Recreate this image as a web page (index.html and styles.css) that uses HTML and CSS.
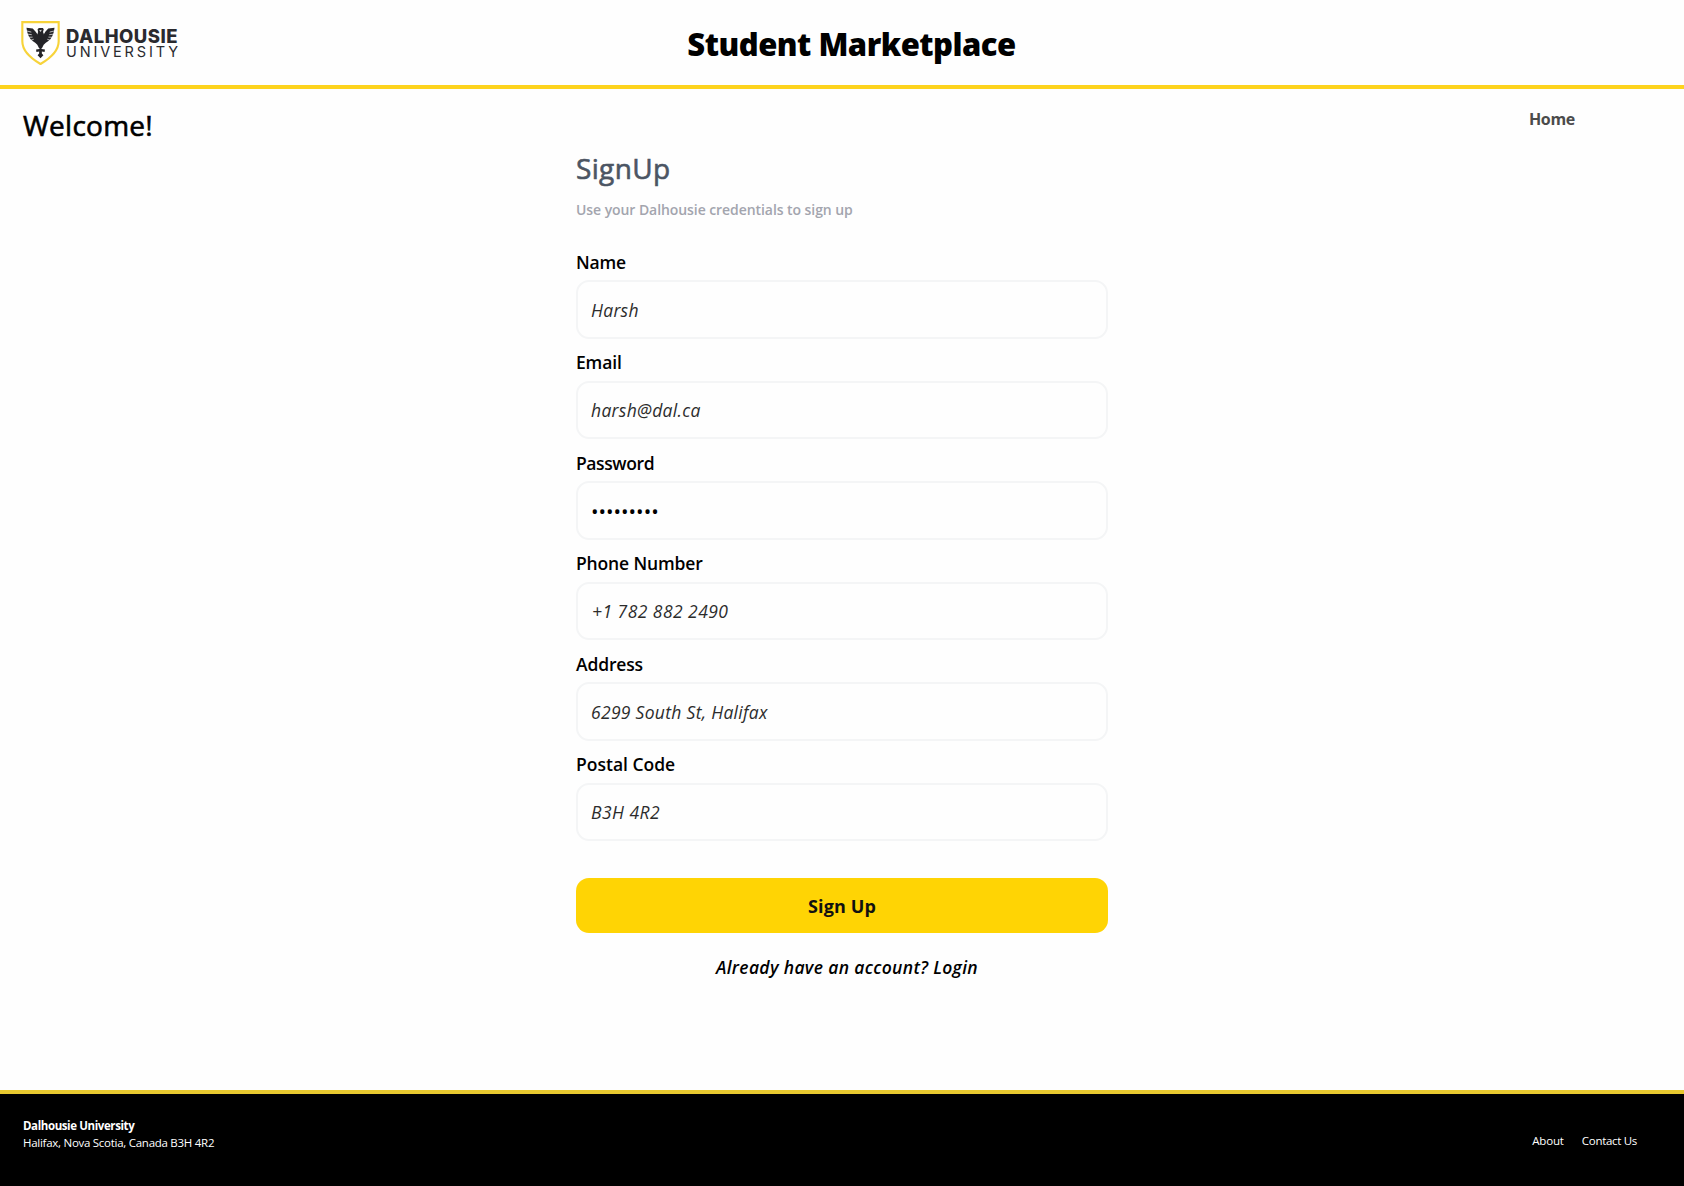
FILE: index.html
```html
<!DOCTYPE html>
<html lang="en">
<head>
<meta charset="utf-8">
<title>Student Marketplace</title>
<link rel="stylesheet" href="styles.css">
</head>
<body>
<header class="header">
  <a class="brand">
    <svg class="crest" viewBox="0 0 40 45.5" width="39" height="44">
      <path d="M1.2 1.2H38.8V21C38.8 31.5 29.5 39 20 44.5C10.500 39 1.200 31.500 1.200 21Z" fill="#fff" stroke="#f7d33a" stroke-width="2.2"/>
      <g fill="#242428">
        <path d="M5.500 7L12 7.800L15 11L17 14V8.600L18.300 7.200H22.500L23.300 8.600V14L25 11L28 7.800L34.500 7L34 10L33.300 13L32 16L30.200 18.800L27.800 21L25.500 22.500L23.300 24.500L21.600 28H18.400L16.700 24.500L14.500 22.500L12.200 21L9.800 18.800L8 16L6.700 13L6 10Z"/>
        <path d="M18.900 26H21.100V29L24.600 29.500L24.200 32L21.400 31.500V33.500L23 35.500L20 38.500L17 35.500L18.600 33.500V31.500L15.800 32L15.400 29.500L18.900 29Z"/>
      </g>
      <path d="M5.500 10.200L10.500 11.500M6 13.500L11 14.200M7.500 16.800L11.800 16.700M9.800 20L13 18.900M34.500 10.200L29.500 11.500M34 13.500L29 14.200M32.500 16.800L28.200 16.700M30.200 20L27 18.900" stroke="#fff" stroke-width=".7"/>
      <path d="M15.700 7.500L17.300 10.500V13L15.600 10.500ZM24.500 7.500L22.800 10.500V13L24.700 10.500Z" fill="#fff"/>
      <path d="M18.500 9.500L21.300 9L20.300 11.400Z" fill="#ccc"/>
    </svg>
    <span class="wordmark">
      <span class="wordmark-top">DALHOUSIE</span>
      <span class="wordmark-bottom">UNIVERSITY</span>
    </span>
  </a>
  <h1 class="title">Student Marketplace</h1>
</header>
<div class="topbar">
  <h2 class="welcome">Welcome!</h2>
  <a class="home">Home</a>
</div>
<main class="main">
  <form class="form">
    <h2 class="form-title">SignUp</h2>
    <p class="hint">Use your Dalhousie credentials to sign up</p>
    <label class="field"><span class="label">Name</span><input class="input" type="text" value="Harsh"></label>
    <label class="field"><span class="label">Email</span><input class="input" type="text" value="harsh@dal.ca"></label>
    <label class="field"><span class="label l-password">Password</span><input class="input i-password" type="text" value="•••••••••"></label>
    <label class="field"><span class="label">Phone Number</span><input class="input i-phone" type="text" value="+1 782 882 2490"></label>
    <label class="field"><span class="label">Address</span><input class="input" type="text" value="6299 South St, Halifax"></label>
    <label class="field"><span class="label l-postal">Postal Code</span><input class="input i-postal" type="text" value="B3H 4R2"></label>
    <button class="submit" type="button">Sign Up</button>
    <p class="login">Already have an account? Login</p>
  </form>
</main>
<footer class="footer">
  <div class="address">
    <strong class="org">Dalhousie University</strong>
    <span class="place">Halifax, Nova Scotia, Canada B3H 4R2</span>
  </div>
  <nav class="links"><a class="about">About</a><a class="contact">Contact Us</a></nav>
</footer>
</body>
</html>
```
FILE: styles.css
```css
* { box-sizing: border-box; }
body {
  margin: 0;
  height: 1186px;
  display: flex;
  flex-direction: column;
  background: #fefefe;
  color: #000;
  font-family: "Open Sans", "Noto Sans", sans-serif;
  overflow: hidden;
}
h1, h2, p { margin: 0; }
.header {
  height: 89px;
  display: grid;
  grid-template-columns: 1fr auto 1fr;
  align-items: center;
  padding: 0 21px;
  border-bottom: 4px solid #fdd31d;
}
.brand { display: flex; align-items: center; gap: 6px; }
.crest { display: block; }
.wordmark { display: flex; flex-direction: column; padding-top: 1px; color: #2a2a2e; white-space: nowrap; }
.wordmark-top { font: 800 18.5px/16px Inter, sans-serif; letter-spacing: 0.5px; }
.wordmark-bottom { font: 400 14.5px/15px Inter, sans-serif; letter-spacing: 2.85px; }
.title { font-size: 31px; line-height: 40px; font-weight: 800; letter-spacing: -0.5px; padding: 2px 0 0 19px; white-space: nowrap; }
.topbar { height: 60.4px; display: flex; justify-content: space-between; padding: 16px 109px 0 23px; }
.welcome { font-size: 28px; line-height: 40px; font-weight: 400; letter-spacing: 0.25px; -webkit-text-stroke: 0.6px currentColor; }
.home { font-size: 16px; line-height: 28px; font-weight: 700; letter-spacing: -0.3px; color: #4b4b4b; }
.main { flex: 1; display: flex; justify-content: center; }
.form { width: 532px; display: flex; flex-direction: column; }
.form-title { font-size: 28px; line-height: 38px; font-weight: 400; letter-spacing: 0.35px; color: #4b5563; -webkit-text-stroke: 0.6px currentColor; }
.hint { font-size: 14px; line-height: 20px; margin: 13px 0 29.5px; font-weight: 600; letter-spacing: -0.07px; color: #a3a5ae; }
.field { display: flex; flex-direction: column; height: 100.5px; }
.label { font-size: 17.5px; line-height: 24px; height: 30.3px; font-weight: 600; letter-spacing: -0.15px; }
.l-password { letter-spacing: -0.4px; }
.l-postal { letter-spacing: 0; }
.label, .hint, .form-title, .login { white-space: nowrap; }
.input {
  height: 58.5px;
  padding: 1px 13px 0;
  border: 2px solid #f4f5f6;
  border-radius: 13px;
  background: #fefefe;
  color: #2c2c2c;
  font: italic 400 17.5px "Open Sans", "Noto Sans", sans-serif;
  letter-spacing: 0.3px;
  outline: none;
}
.i-password { font-style: normal; font-size: 20px; letter-spacing: 0; color: #000; padding: 2px 13px 0; }
.i-phone { letter-spacing: 0.45px; padding-left: 14px; }
.i-postal { letter-spacing: 0.45px; }
.submit {
  height: 55px;
  margin-top: 25px;
  padding: 2px 0 0;
  border: 0;
  border-radius: 13px;
  background: #ffd404;
  color: #111;
  font: 700 18px "Open Sans", "Noto Sans", sans-serif;
  letter-spacing: 0.1px;
}
.login { margin: 21px 0 0 10px; text-align: center; font-size: 17.5px; line-height: 26px; font-style: italic; font-weight: 600; letter-spacing: 0.33px; }
.footer {
  height: 96px;
  display: flex;
  justify-content: space-between;
  border-top: 4px solid #e8c92f;
  background: #000;
  color: #fff;
  padding: 23px 47px 0 23px;
  font-size: 11.5px;
}
.address { display: flex; flex-direction: column; line-height: 17px; }
.org { letter-spacing: -0.4px; }
.place { letter-spacing: -0.27px; }
.links { display: flex; gap: 18px; line-height: 17px; padding-top: 15px; }
.about { letter-spacing: -0.15px; }
.contact { letter-spacing: -0.3px; }
```
